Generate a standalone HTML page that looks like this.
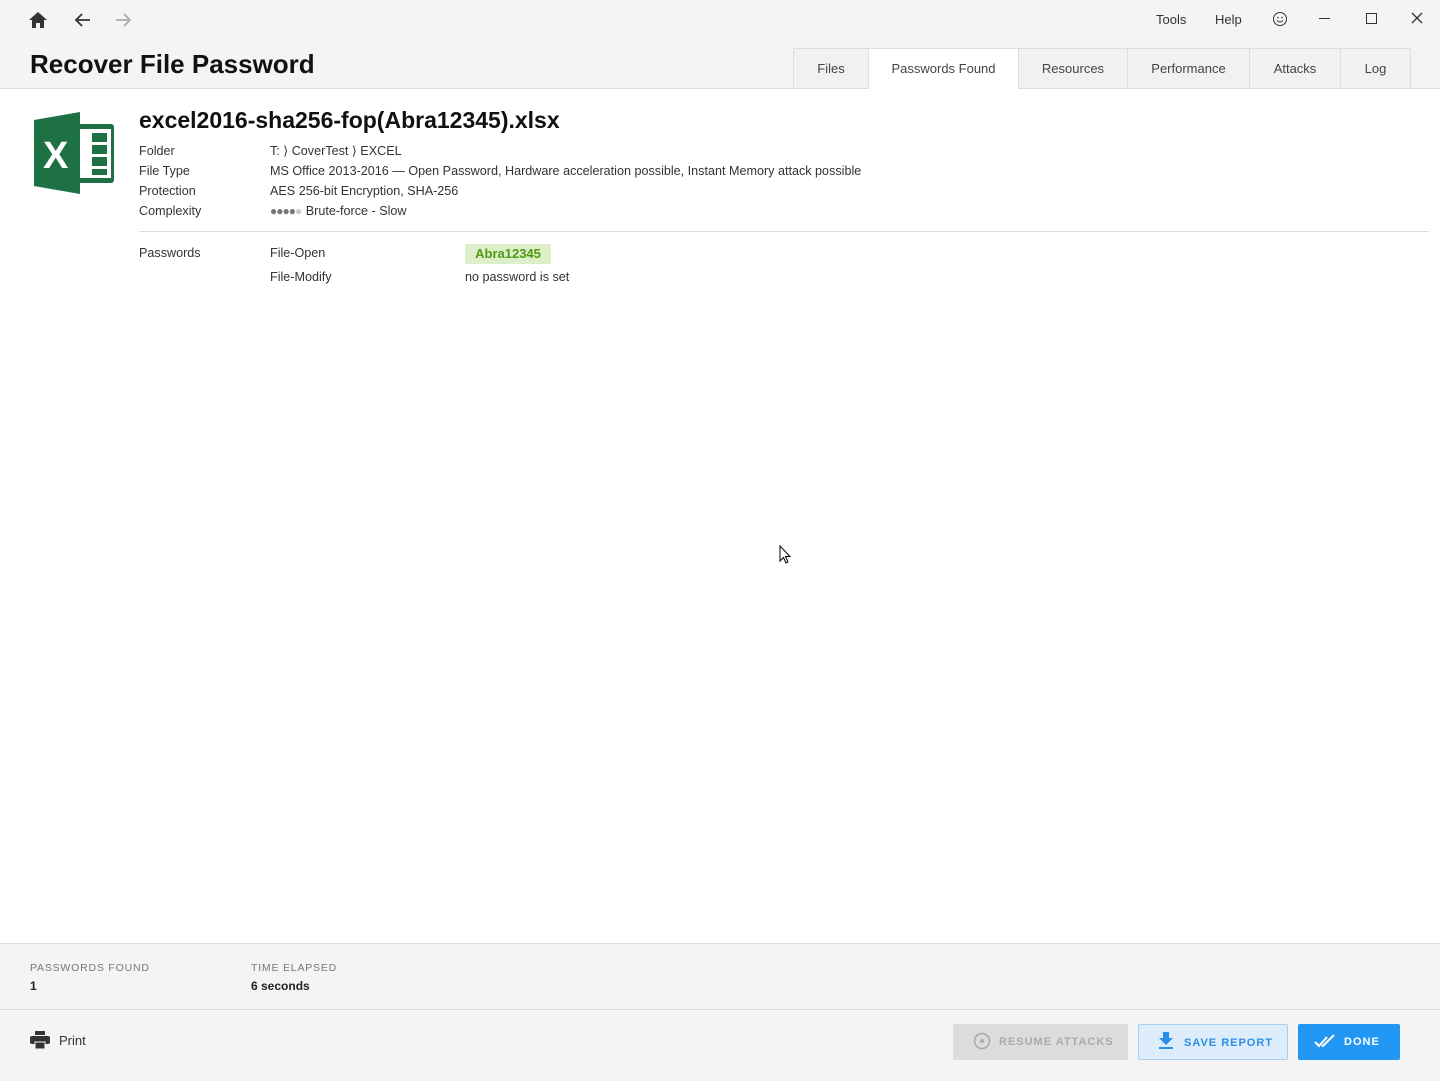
<!DOCTYPE html><html><head><style>
body{margin:0;width:1440px;height:1080px;background:#fff;font-family:"Liberation Sans",sans-serif;color:#222;position:relative;overflow:hidden}
.a{position:absolute}
.hdr{left:0;top:0;width:1440px;height:88px;background:#f4f4f4;border-bottom:1px solid #ddd}
.tab{position:absolute;top:48px;height:40px;box-sizing:border-box;border:1px solid #ddd;border-bottom:none;background:#f1f1f1;font-size:13px;color:#444;text-align:center;line-height:40px}
.lbl{font-size:12.6px;color:#333}
.ft{left:0;top:943px;width:1440px;height:137px;background:#f4f4f4;border-top:1px solid #ddd}
.btn{position:absolute;top:1024px;height:36px;font-size:11px;font-weight:bold;letter-spacing:1px;line-height:36px;box-sizing:border-box;border-radius:2px}
</style></head><body>
<div class="a hdr"></div>
<svg class="a" style="left:28px;top:10px" width="20" height="20" viewBox="0 0 20 20"><path d="M10 2 L1 10 H4 V18 H8 V13 H12 V18 H16 V10 H19 Z" fill="#333"/></svg>
<svg class="a" style="left:74px;top:11px" width="18" height="18" viewBox="0 0 18 18"><path d="M16 9 H3 M8 3 L2 9 L8 15" stroke="#333" stroke-width="1.8" fill="none"/></svg>
<svg class="a" style="left:114px;top:11px" width="18" height="18" viewBox="0 0 18 18"><path d="M2 9 H15 M10 3 L16 9 L10 15" stroke="#aaa" stroke-width="1.8" fill="none"/></svg>
<div class="a" style="left:30px;top:49px;font-size:26px;font-weight:bold;color:#111">Recover File Password</div>
<div class="a" style="left:1156px;top:12px;font-size:13px;color:#333">Tools</div>
<div class="a" style="left:1215px;top:12px;font-size:13px;color:#333">Help</div>
<svg class="a" style="left:1272px;top:11px" width="16" height="16" viewBox="0 0 16 16"><circle cx="8" cy="8" r="6.5" stroke="#333" fill="none"/><circle cx="6" cy="6.5" r=".8" fill="#333"/><circle cx="10" cy="6.5" r=".8" fill="#333"/><path d="M5 9.5 Q8 12.5 11 9.5" stroke="#333" fill="none"/></svg>
<div class="a" style="left:1319px;top:18px;width:11px;height:1px;background:#333"></div>
<div class="a" style="left:1366px;top:13px;width:9px;height:9px;border:1.3px solid #333"></div>
<svg class="a" style="left:1411px;top:12px" width="12" height="12"><path d="M1 1 L11 11 M11 1 L1 11" stroke="#333" stroke-width="1.3"/></svg>
<div class="tab" style="left:793px;width:76px">Files</div>
<div class="tab" style="left:868px;width:151px;background:#fff;height:41px">Passwords Found</div>
<div class="tab" style="left:1018px;width:110px">Resources</div>
<div class="tab" style="left:1127px;width:123px">Performance</div>
<div class="tab" style="left:1249px;width:92px">Attacks</div>
<div class="tab" style="left:1340px;width:71px">Log</div>
<svg class="a" style="left:34px;top:112px" width="82" height="82" viewBox="0 0 82 82"><rect x="36" y="12" width="44" height="59" rx="3" fill="#1e7145"/><rect x="44" y="17" width="33" height="49" fill="#fff"/><g fill="#1e7145"><rect x="58" y="21" width="15" height="9"/><rect x="58" y="33" width="15" height="9"/><rect x="58" y="45" width="15" height="9"/><rect x="58" y="57" width="15" height="6"/></g><path d="M0 8 L46 0 V82 L0 74 Z" fill="#1e7145"/><text x="9" y="56" font-family="Liberation Sans" font-weight="bold" font-size="38" fill="#fff">X</text></svg>
<div class="a" style="left:139px;top:107px;font-size:23px;font-weight:bold;color:#111">excel2016-sha256-fop(Abra12345).xlsx</div>
<div class="a lbl" style="left:139px;top:141px;line-height:20px">Folder<br>File Type<br>Protection<br>Complexity</div>
<div class="a lbl" style="left:270px;top:141px;line-height:20px">T: ⟩ CoverTest ⟩ EXCEL<br>MS Office 2013-2016 — Open Password, Hardware acceleration possible, Instant Memory attack possible<br>AES 256-bit Encryption, SHA-256<br><span style="color:#777;font-size:12px;letter-spacing:-1px">●●●●</span><span style="color:#ccc;font-size:12px">●</span> Brute-force - Slow</div>
<div class="a" style="left:139px;top:231px;width:1290px;height:1px;background:#ddd"></div>
<div class="a lbl" style="left:139px;top:246px">Passwords</div>
<div class="a lbl" style="left:270px;top:246px">File-Open</div>
<div class="a lbl" style="left:270px;top:270px">File-Modify</div>
<div class="a" style="left:465px;top:244px;width:86px;height:20px;background:#dcefc8;border-radius:2px;color:#4c9a12;font-weight:bold;font-size:13px;text-align:center;line-height:20px">Abra12345</div>
<div class="a lbl" style="left:465px;top:270px">no password is set</div>
<div class="a ft"></div>
<div class="a" style="left:0;top:1009px;width:1440px;height:1px;background:#ddd"></div>
<div class="a" style="left:30px;top:962px;font-size:10.5px;letter-spacing:.8px;color:#777">PASSWORDS FOUND</div>
<div class="a" style="left:30px;top:979px;font-size:12px;font-weight:bold">1</div>
<div class="a" style="left:251px;top:962px;font-size:10.5px;letter-spacing:.8px;color:#777">TIME ELAPSED</div>
<div class="a" style="left:251px;top:979px;font-size:12px;font-weight:bold">6 seconds</div>
<svg class="a" style="left:30px;top:1031px" width="20" height="18" viewBox="0 0 20 18"><rect x="5" y="0" width="10" height="4" fill="#333"/><rect x="0" y="5" width="20" height="8" rx="2" fill="#333"/><rect x="5" y="11" width="10" height="7" fill="#333" stroke="#f4f4f4"/></svg>
<div class="a" style="left:59px;top:1033px;font-size:13px;color:#333">Print</div>
<div class="btn" style="left:953px;width:175px;background:#dcdcdc;color:#aaa;padding-left:46px">RESUME ATTACKS</div>
<svg class="a" style="left:970px;top:1031px" width="22" height="20"><circle cx="12" cy="10" r="7.5" stroke="#aaa" stroke-width="1.5" fill="none"/><circle cx="12" cy="10" r="2" fill="#aaa"/></svg>
<div class="btn" style="left:1138px;width:150px;background:#dcecfa;border:1px solid #a8d0f3;color:#2b8ee8;padding-left:45px">SAVE REPORT</div>
<svg class="a" style="left:1158px;top:1032px" width="16" height="18"><path d="M5 0 H11 V6 H15 L8 13 L1 6 H5 Z" fill="#2b8ee8"/><rect x="1" y="15" width="14" height="2" fill="#2b8ee8"/></svg>
<div class="btn" style="left:1298px;width:102px;background:#2196f3;color:#fff;padding-left:46px">DONE</div>
<svg class="a" style="left:1314px;top:1034px" width="24" height="14"><path d="M1 8 L5 12 L13 3 M8 11 L9 12 L20 1" stroke="#fff" stroke-width="2" fill="none"/></svg>
<svg class="a" style="left:779px;top:545px" width="13" height="20"><path d="M1 1 V16 L4.5 12.5 L7 18 L9 17 L6.5 11.5 H11 Z" fill="#fff" stroke="#000"/></svg>
</body></html>
